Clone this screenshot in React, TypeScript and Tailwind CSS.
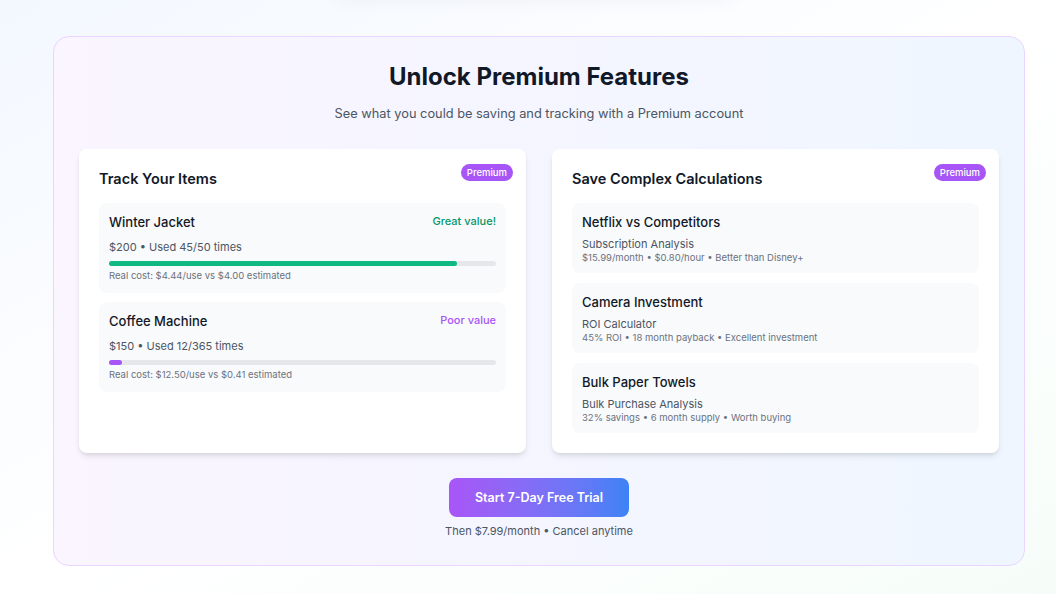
const ITEMS = [
  {
    name: "Winter Jacket",
    price: 200,
    used: 45,
    total: 50,
    tag: "Great value!",
    tagClass: "text-[#059669]",
    barClass: "bg-[#10b981]",
    note: "Real cost: $4.44/use vs $4.00 estimated",
  },
  {
    name: "Coffee Machine",
    price: 150,
    used: 12,
    total: 365,
    tag: "Poor value",
    tagClass: "text-[#a855f7]",
    barClass: "bg-[#a855f7]",
    note: "Real cost: $12.50/use vs $0.41 estimated",
  },
];

const CALCS = [
  {
    title: "Netflix vs Competitors",
    kind: "Subscription Analysis",
    detail: "$15.99/month • $0.80/hour • Better than Disney+",
  },
  {
    title: "Camera Investment",
    kind: "ROI Calculator",
    detail: "45% ROI • 18 month payback • Excellent investment",
  },
  {
    title: "Bulk Paper Towels",
    kind: "Bulk Purchase Analysis",
    detail: "32% savings • 6 month supply • Worth buying",
  },
];

function PremiumBadge() {
  return (
    <span className="absolute top-[15px] right-[13px] rounded-full bg-[#a855f7] px-1.5 py-[1.5px] text-[9.5px] font-medium leading-[14px] text-white">
      Premium
    </span>
  );
}

function Card({ title, gap, children }: { title: string; gap: string; children: React.ReactNode }) {
  return (
    <div className="relative rounded-lg bg-white p-5 shadow-md">
      <PremiumBadge />
      <h3 className="mb-3.5 text-[14.5px] font-semibold leading-5 text-[#111827]">{title}</h3>
      <div className={gap}>{children}</div>
    </div>
  );
}

export default function App() {
  return (
    <div
      className="min-h-[594px] overflow-hidden bg-linear-to-br from-[#f3f8ff] via-white to-[#f6fdf9] pt-9 pb-7"
      style={{ fontFamily: "Inter, 'Noto Sans', sans-serif" }}
    >
      {/* bottom edge of the section above, mostly scrolled out */}
      <div className="-mt-[60px] mb-[50px] ml-[335px] h-[10px] w-[400px] rounded-xl bg-white shadow-[0_8px_22px_rgba(0,0,0,0.1)]" />

      <div className="ml-[53px] w-[972px] rounded-2xl border border-[#e9d5ff] bg-linear-to-r from-[#faf5ff] to-[#eff6ff] px-[25px] pt-6 pb-[26px]">
        <div className="text-center">
          <h2 className="text-2xl font-bold leading-8 text-[#111827]">Unlock Premium Features</h2>
          <p className="mt-[11px] text-[12.8px] leading-5 text-[#4b5563]">
            See what you could be saving and tracking with a Premium account
          </p>
        </div>

        <div className="mt-[25px] grid grid-cols-2 gap-[26px]">
          <Card title="Track Your Items" gap="space-y-[9px]">
            {ITEMS.map((item) => (
              <div key={item.name} className="rounded-lg bg-[#f9fafb] px-2.5 pt-[9px] pb-[10px]">
                <div className="mb-[7px] flex items-center justify-between">
                  <span className="text-[13px] font-medium leading-5 text-[#111827]">{item.name}</span>
                  <span className={`-mt-[2px] text-[11px] font-medium leading-4 ${item.tagClass}`}>{item.tag}</span>
                </div>
                <p className="text-[11px] leading-4 text-[#4b5563]">
                  ${item.price} • Used {item.used}/{item.total} times
                </p>
                <div className="mt-[6px] h-[5px] w-full rounded-full bg-[#e5e7eb]">
                  <div
                    className={`h-[5px] rounded-full ${item.barClass}`}
                    style={{ width: `${Math.max((item.used / item.total) * 100, 3)}%` }}
                  />
                </div>
                <p className="mt-[3px] text-[9.5px] leading-[14px] text-[#6b7280]">{item.note}</p>
              </div>
            ))}
          </Card>

          <Card title="Save Complex Calculations" gap="space-y-2.5">
            {CALCS.map((c) => (
              <div key={c.title} className="rounded-lg bg-[#f9fafb] px-2.5 pt-[9px] pb-[9px]">
                <p className="text-[13px] font-medium leading-5 text-[#111827]">{c.title}</p>
                <p className="mt-[4px] text-[11px] leading-4 text-[#4b5563]">{c.kind}</p>
                <p className="text-[9.5px] leading-3 text-[#6b7280]">{c.detail}</p>
              </div>
            ))}
          </Card>
        </div>

        <div className="mt-[25px] flex flex-col items-center">
          <button className="rounded-lg bg-linear-to-r from-[#a855f7] to-[#3b82f6] px-[26px] py-2.5 text-[12.5px] font-semibold leading-[19px] text-white">
            Start 7-Day Free Trial
          </button>
          <p className="mt-1.5 text-[11px] leading-4 text-[#4b5563]">Then $7.99/month • Cancel anytime</p>
        </div>
      </div>
    </div>
  );
}
